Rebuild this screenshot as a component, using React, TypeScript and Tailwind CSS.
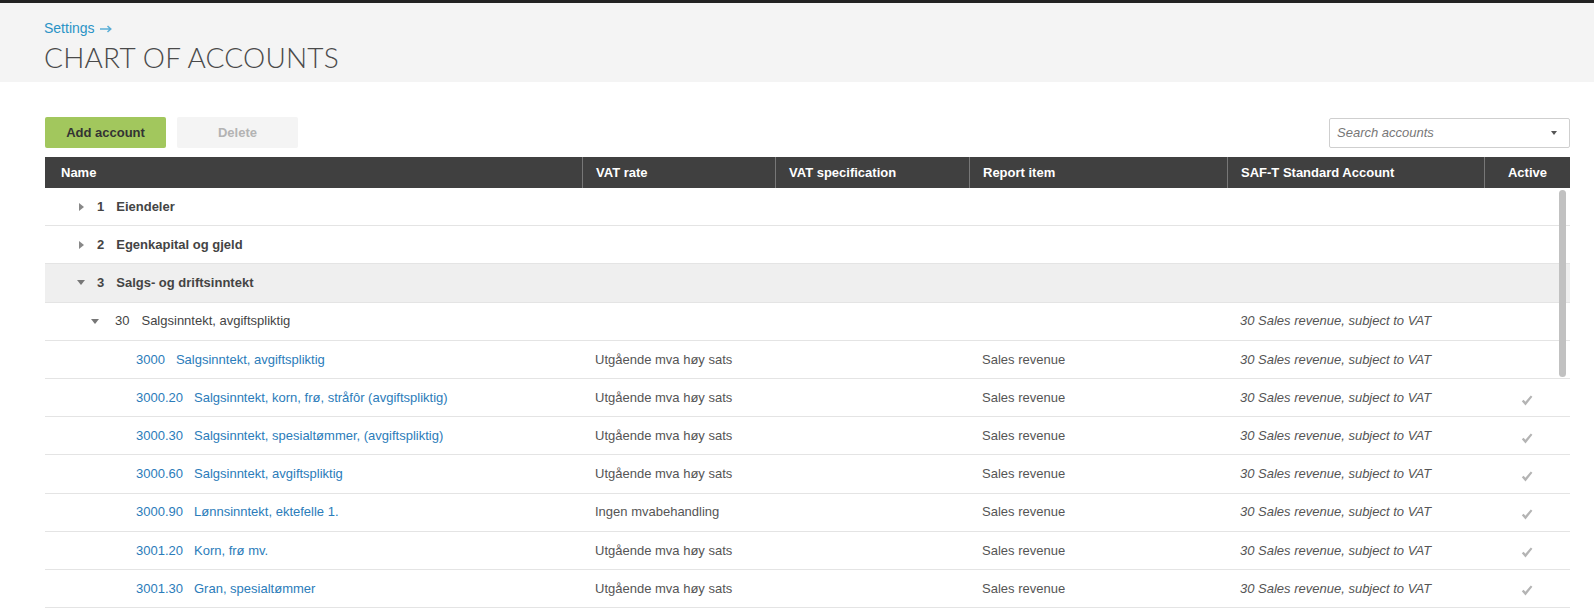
import React from 'react';

type Row =
    | { kind: 'group'; level: 1 | 2; code: string; name: string; open: boolean; shaded?: boolean; saft?: string }
    | { kind: 'account'; code: string; name: string; vat: string; report: string; saft: string; active: boolean };

const rows: Row[] = [
    { kind: 'group', level: 1, code: '1', name: 'Eiendeler', open: false },
    { kind: 'group', level: 1, code: '2', name: 'Egenkapital og gjeld', open: false },
    { kind: 'group', level: 1, code: '3', name: 'Salgs- og driftsinntekt', open: true, shaded: true },
    { kind: 'group', level: 2, code: '30', name: 'Salgsinntekt, avgiftspliktig', open: true, saft: '30 Sales revenue, subject to VAT' },
    { kind: 'account', code: '3000', name: 'Salgsinntekt, avgiftspliktig', vat: 'Utgående mva høy sats', report: 'Sales revenue', saft: '30 Sales revenue, subject to VAT', active: false },
    { kind: 'account', code: '3000.20', name: 'Salgsinntekt, korn, frø, stråfôr (avgiftspliktig)', vat: 'Utgående mva høy sats', report: 'Sales revenue', saft: '30 Sales revenue, subject to VAT', active: true },
    { kind: 'account', code: '3000.30', name: 'Salgsinntekt, spesialtømmer, (avgiftspliktig)', vat: 'Utgående mva høy sats', report: 'Sales revenue', saft: '30 Sales revenue, subject to VAT', active: true },
    { kind: 'account', code: '3000.60', name: 'Salgsinntekt, avgiftspliktig', vat: 'Utgående mva høy sats', report: 'Sales revenue', saft: '30 Sales revenue, subject to VAT', active: true },
    { kind: 'account', code: '3000.90', name: 'Lønnsinntekt, ektefelle 1.', vat: 'Ingen mvabehandling', report: 'Sales revenue', saft: '30 Sales revenue, subject to VAT', active: true },
    { kind: 'account', code: '3001.20', name: 'Korn, frø mv.', vat: 'Utgående mva høy sats', report: 'Sales revenue', saft: '30 Sales revenue, subject to VAT', active: true },
    { kind: 'account', code: '3001.30', name: 'Gran, spesialtømmer', vat: 'Utgående mva høy sats', report: 'Sales revenue', saft: '30 Sales revenue, subject to VAT', active: true },
];

const Caret = ({ open }: { open: boolean }) =>
    open ? (
        <svg width="8" height="5" viewBox="0 0 8 5" className="shrink-0">
            <path d="M0 0 L8 0 L4 5 Z" fill="#777" />
        </svg>
    ) : (
        <svg width="5" height="8" viewBox="0 0 5 8" className="shrink-0">
            <path d="M0 0 L5 4 L0 8 Z" fill="#888" />
        </svg>
    );

const Check = () => (
    <svg width="12" height="11" viewBox="0 0 12 11">
        <path d="M0.8 6.2 L2.6 4.8 L4.4 6.8 L9.8 0.4 L11.4 1.8 L4.5 10.4 Z" fill="#b4b4b4" />
    </svg>
);

const cols = 'grid grid-cols-[537px_193px_194px_258px_257px_1fr]';

export default function App() {
    return (
        <div className="min-h-screen bg-white text-[13px] text-[#444]" style={{ fontFamily: '"Liberation Sans", Arial, sans-serif' }}>
            <div className="h-[3px] bg-[#222]" />
            {/* page header */}
            <div className="h-[79px] bg-[#f4f4f4] pl-[44px] pt-[15px]">
                <div className="flex items-center gap-[5px] text-[14px] leading-[20px] text-[#2a93c6]">
                    <span>Settings</span>
                    <svg width="12" height="8" viewBox="0 0 12 8" className="mt-[1px]">
                        <path d="M0 4 H10.5 M7.5 1 L10.8 4 L7.5 7" stroke="#5aaed6" strokeWidth="1.5" fill="none" />
                    </svg>
                </div>
                <h1 className="mt-[4px] text-[28px] font-light leading-[30px] tracking-[0.2px] text-[#4a4a4a]" style={{ fontFamily: 'Lato, "Open Sans", sans-serif' }}>
                    CHART OF ACCOUNTS
                </h1>
            </div>

            <div className="pl-[45px] pr-[24px] pt-[35px]">
                {/* toolbar */}
                <div className="flex items-center justify-between">
                    <div className="flex gap-[11px]">
                        <button className="h-[31px] w-[121px] rounded-[2px] bg-[#a2c75d] text-[13px] font-bold text-[#333]">Add account</button>
                        <button className="h-[31px] w-[121px] rounded-[2px] bg-[#f4f4f4] text-[13px] font-bold text-[#b3b3b3]">Delete</button>
                    </div>
                    <div className="flex h-[30px] w-[241px] items-center justify-between rounded-[2px] border border-[#cfcfcf] pl-[7px] pr-[12px]">
                        <span className="text-[13px] italic text-[#777]">Search accounts</span>
                        <svg width="6" height="4" viewBox="0 0 6 4"><path d="M0 0 L6 0 L3 4 Z" fill="#555" /></svg>
                    </div>
                </div>

                {/* table */}
                <div className="mt-[9px]">
                    <div className={`${cols} h-[31px] items-stretch bg-[#404040] text-[13px] font-bold text-white`}>
                        <div className="flex items-center pl-[16px]">Name</div>
                        <div className="flex items-center border-l border-[#777] pl-[13px]">VAT rate</div>
                        <div className="flex items-center border-l border-[#777] pl-[13px]">VAT specification</div>
                        <div className="flex items-center border-l border-[#777] pl-[13px]">Report item</div>
                        <div className="flex items-center border-l border-[#777] pl-[13px]">SAF-T Standard Account</div>
                        <div className="flex items-center justify-center border-l border-[#777]">Active</div>
                    </div>

                    <div className="relative">
                        {rows.map((r, i) => (
                            <div
                                key={i}
                                className={`${cols} h-[38.2px] items-center border-b border-[#e4e4e4] ${r.kind === 'group' && r.shaded ? 'bg-[#efefef]' : ''}`}
                            >
                                {r.kind === 'group' ? (
                                    <>
                                        <div className={`flex items-center ${r.level === 1 ? 'pl-[31px]' : 'pl-[45px]'}`}>
                                            <span className="flex w-[10px] justify-center">
                                                <Caret open={r.open} />
                                            </span>
                                            {r.level === 1 ? (
                                                <span className="ml-[11px] font-bold text-[#444]">
                                                    {r.code}
                                                    <span className="ml-[12px]">{r.name}</span>
                                                </span>
                                            ) : (
                                                <span className="ml-[15px] text-[#444]">
                                                    {r.code}
                                                    <span className="ml-[12px]">{r.name}</span>
                                                </span>
                                            )}
                                        </div>
                                        <div />
                                        <div />
                                        <div />
                                        <div className="pl-[13px] italic text-[#555]">{r.saft}</div>
                                        <div />
                                    </>
                                ) : (
                                    <>
                                        <div className="pl-[91px] text-[#2b7cba]">
                                            {r.code}
                                            <span className="ml-[11px]">{r.name}</span>
                                        </div>
                                        <div className="pl-[13px] text-[#555]">{r.vat}</div>
                                        <div />
                                        <div className="pl-[13px] text-[#555]">{r.report}</div>
                                        <div className="pl-[13px] italic text-[#555]">{r.saft}</div>
                                        <div className="flex justify-center pt-[5px]">{r.active && <Check />}</div>
                                    </>
                                )}
                            </div>
                        ))}
                        {/* scrollbar thumb */}
                        <div className="absolute right-[4px] top-[2px] h-[187px] w-[7px] rounded-[4px] bg-[#c1c1c1]" />
                    </div>
                </div>
            </div>
        </div>
    );
}
